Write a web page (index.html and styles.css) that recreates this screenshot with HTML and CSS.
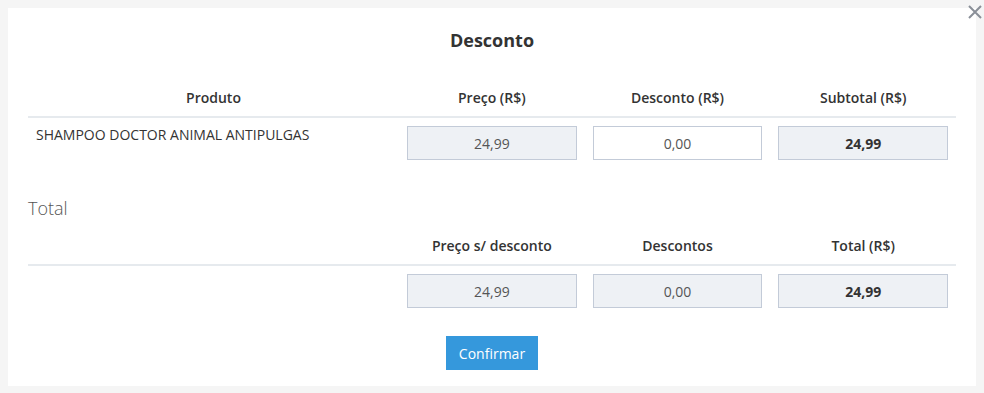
FILE: index.html
```html
<!DOCTYPE html>
<html lang="pt-BR">

<head>
    <meta charset="UTF-8">
    <meta name="viewport" content="width=device-width, initial-scale=1.0">
    <title>Desconto</title>
    <link rel="stylesheet" href="styles.css">
</head>

<body>
    <div class="modal">
        <button class="close-btn" aria-label="Fechar">
            <svg width="14" height="14" viewBox="0 0 14 14">
                <path d="M1 1 L13 13 M13 1 L1 13" stroke="#8a8f98" stroke-width="2" fill="none" />
            </svg>
        </button>

        <h2 class="modal-title">Desconto</h2>

        <!-- Itens -->
        <div class="grid head">
            <div class="cell">Produto</div>
            <div class="cell">Preço (R$)</div>
            <div class="cell">Desconto (R$)</div>
            <div class="cell">Subtotal (R$)</div>
        </div>
        <div class="grid row">
            <div class="cell product">SHAMPOO DOCTOR ANIMAL ANTIPULGAS</div>
            <div class="cell"><input class="field" type="text" value="24,99" readonly></div>
            <div class="cell"><input class="field editable" type="text" value="0,00"></div>
            <div class="cell"><input class="field strong" type="text" value="24,99" readonly></div>
        </div>

        <!-- Total -->
        <h3 class="section-title">Total</h3>
        <div class="grid head">
            <div class="cell"></div>
            <div class="cell">Preço s/ desconto</div>
            <div class="cell">Descontos</div>
            <div class="cell">Total (R$)</div>
        </div>
        <div class="grid row">
            <div class="cell"></div>
            <div class="cell"><input class="field" type="text" value="24,99" readonly></div>
            <div class="cell"><input class="field" type="text" value="0,00" readonly></div>
            <div class="cell"><input class="field strong" type="text" value="24,99" readonly></div>
        </div>

        <div class="actions">
            <button class="confirm-btn">Confirmar</button>
        </div>
    </div>
</body>

</html>
```

FILE: styles.css
```css
/* Estilos gerais */
body {
    margin: 0;
    padding: 8px;
    background: #f5f5f5;
    font-family: 'Open Sans', sans-serif;
    font-size: 14px;
    color: #333;
}

.modal {
    position: relative;
    background: #fff;
    padding: 20px 20px 16px;
}

.close-btn {
    position: absolute;
    top: -3px;
    right: -6px;
    padding: 0;
    border: none;
    background: none;
    cursor: pointer;
    line-height: 0;
}

.modal-title {
    margin: 0 0 37px;
    text-align: center;
    font-size: 18px;
    font-weight: 700;
    line-height: 24px;
}

/* Tabela */
.grid {
    display: grid;
    grid-template-columns: 371px repeat(3, 1fr);
}

.head {
    border-bottom: 2px solid #e6eaee;
}

.head .cell {
    text-align: center;
    font-weight: 600;
    line-height: 18px;
    padding: 0 8px 9px;
}

.row .cell {
    padding: 8px;
}

.product {
    line-height: 18px;
}

.field {
    display: block;
    box-sizing: border-box;
    width: 100%;
    height: 34px;
    margin: 0;
    border: 1px solid #c3cbd8;
    background: #eef1f5;
    font-family: inherit;
    font-size: 14px;
    color: #555;
    text-align: center;
    outline: none;
}

.field.editable {
    background: #fff;
}

.field.strong {
    font-weight: 700;
    color: #333;
}

.section-title {
    margin: 29px 0 18px;
    font-size: 18px;
    font-weight: 300;
    line-height: 22px;
    color: #555;
}

.actions {
    margin-top: 20px;
    text-align: center;
}

.confirm-btn {
    height: 34px;
    padding: 0 13px;
    border: none;
    background: #3598dc;
    color: #fff;
    font-family: inherit;
    font-size: 14px;
    cursor: pointer;
}
```
